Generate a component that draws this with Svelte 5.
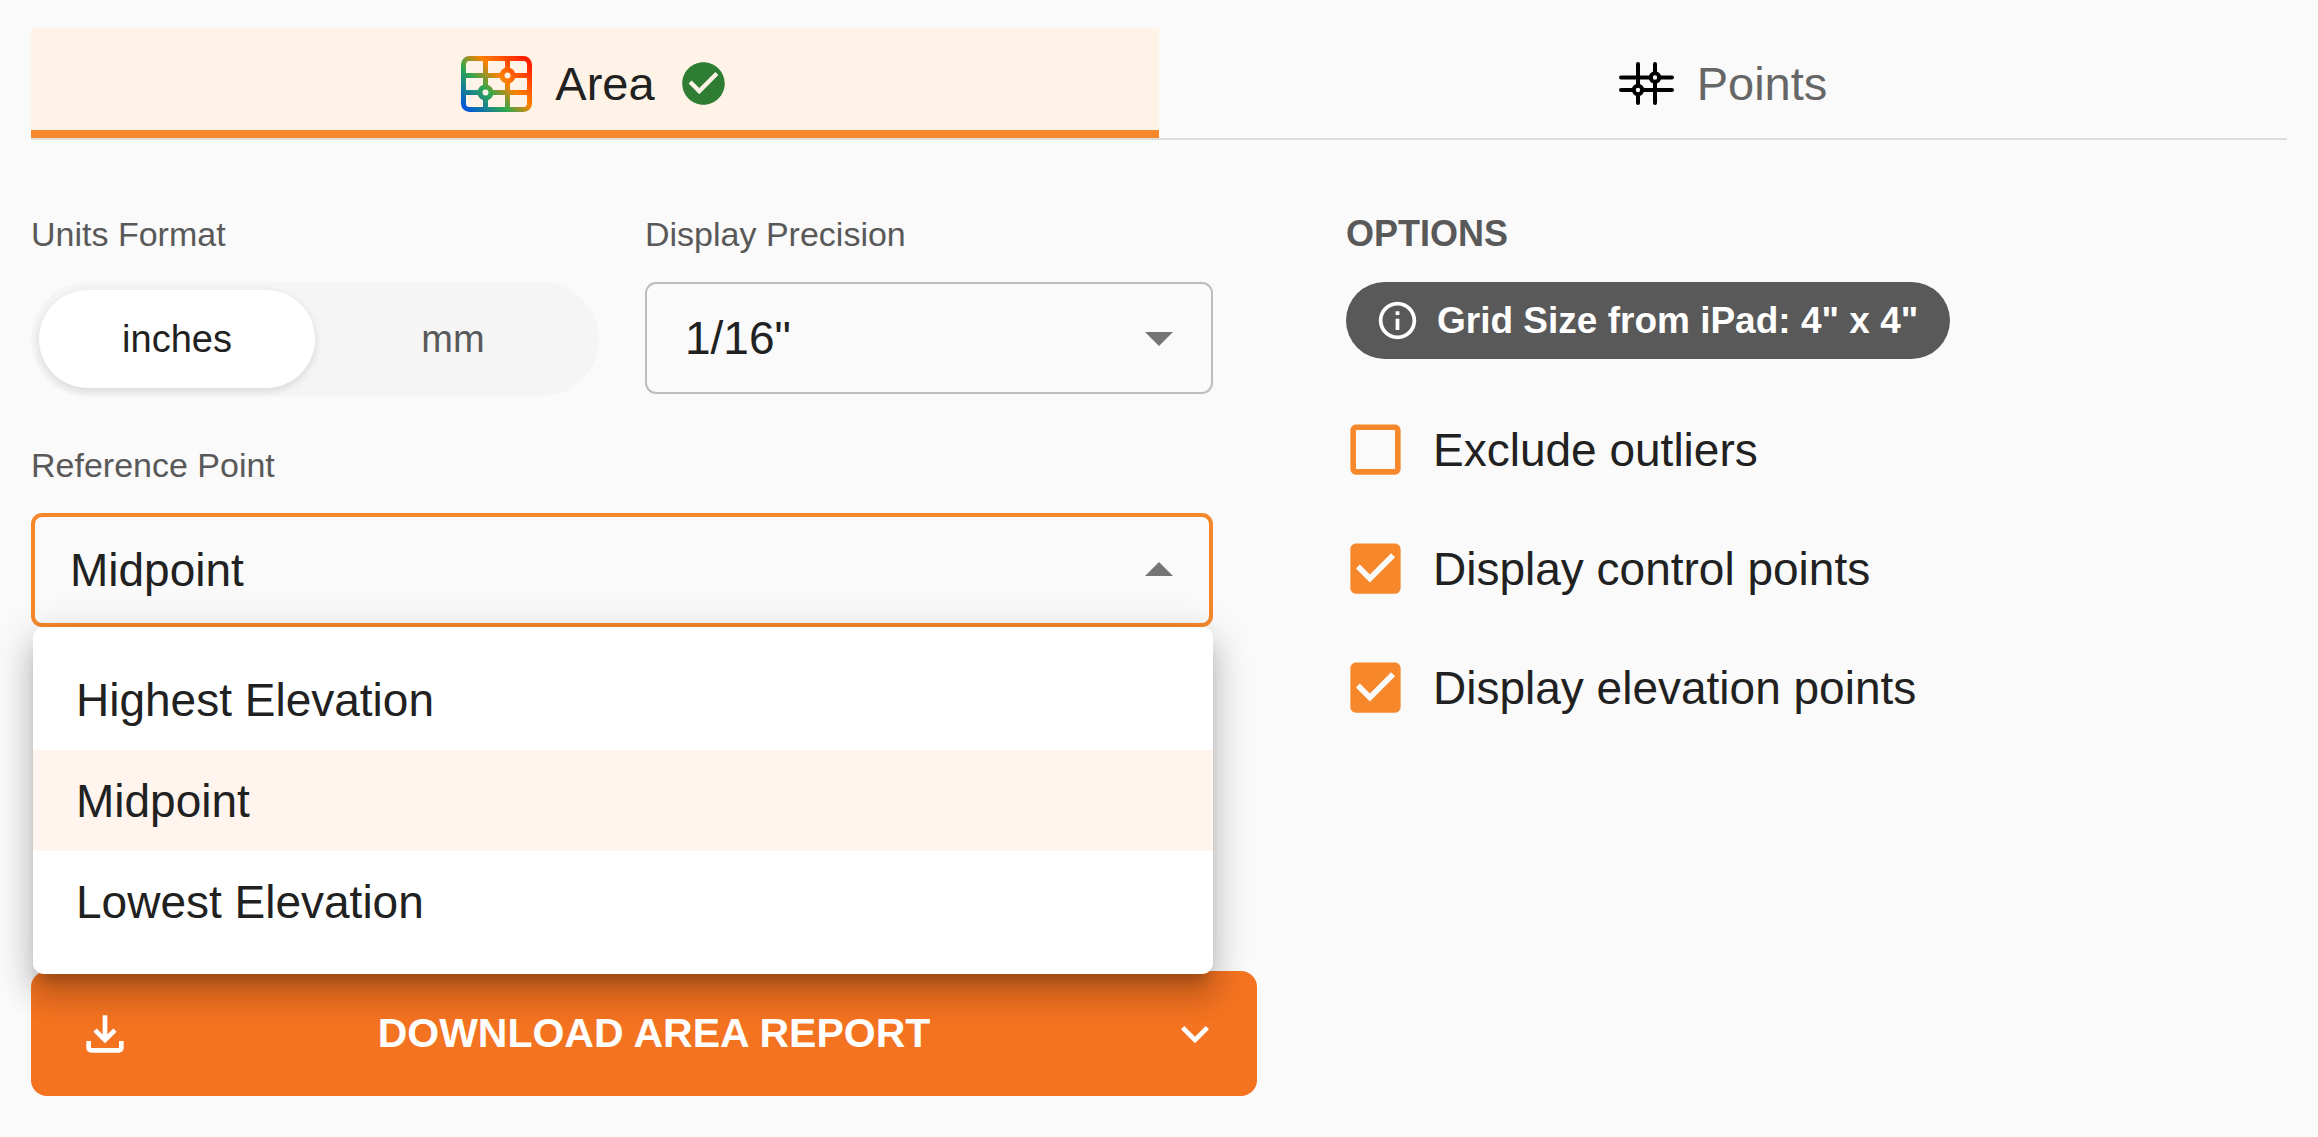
<script>
  let tab = $state('area');
  let units = $state('inches');
  let precision = $state('1/16"');
  let reference = $state('Midpoint');
  let menuOpen = $state(true);

  const points = ['Highest Elevation', 'Midpoint', 'Lowest Elevation'];
  const options = $state([
    { label: 'Exclude outliers', checked: false },
    { label: 'Display control points', checked: true },
    { label: 'Display elevation points', checked: true }
  ]);

  function choose(point) {
    reference = point;
    menuOpen = false;
  }
</script>

<main>
  <div class="tabs" role="tablist">
    <button class="tab" class:active={tab === 'area'} role="tab" aria-selected={tab === 'area'} onclick={() => (tab = 'area')}>
      <svg width="71" height="56" viewBox="0 0 71 56" aria-hidden="true">
        <defs>
          <linearGradient id="heat" gradientUnits="userSpaceOnUse" x1="4" y1="60" x2="67" y2="-4">
            <stop offset="0.06" stop-color="#0057d9" />
            <stop offset="0.37" stop-color="#2fa84f" />
            <stop offset="0.59" stop-color="#ff8000" />
            <stop offset="0.92" stop-color="#ff1e00" />
          </linearGradient>
        </defs>
        <g fill="none" stroke="url(#heat)" stroke-width="5">
          <rect x="2.5" y="2.5" width="66" height="51" rx="6" />
          <path d="M24.5 3v27M24.5 42v11M46.5 3v10M46.5 25v28M3 19.5h37.500M53 19.500h15M3 36.500h15M31 36.500h37" />
          <circle cx="46.500" cy="19.500" r="5.500" />
          <circle cx="24.500" cy="36.500" r="5.500" />
        </g>
      </svg>
      <span>Area</span>
      <svg class="done" width="51" height="51" viewBox="0 0 24 24" aria-hidden="true">
        <path d="M12 2C6.480 2 2 6.480 2 12s4.480 10 10 10 10-4.480 10-10S17.520 2 12 2zm-2 15l-5-5 1.410-1.410L10 14.170l7.590-7.590L19 8l-9 9z" />
      </svg>
    </button>
    <button class="tab" class:active={tab === 'points'} role="tab" aria-selected={tab === 'points'} onclick={() => (tab = 'points')}>
      <svg width="55" height="43" viewBox="0 0 55 43" aria-hidden="true">
        <g fill="none" stroke="#000" stroke-width="4" stroke-linecap="round">
          <path d="M2 15.500h30M40 15.500h13M2 28h13M23 28h30M19 2v22M19 34v7M36 2v9M36 21v20" />
          <circle cx="36" cy="15.500" r="4.200" />
          <circle cx="19" cy="28" r="4.200" />
        </g>
      </svg>
      <span>Points</span>
    </button>
  </div>

  <div class="panel">
    <section class="settings">
      <div class="row">
        <div class="field" role="group" aria-labelledby="units-label">
          <span class="label" id="units-label">Units Format</span>
          <div class="toggle">
            {#each ['inches', 'mm'] as unit}
              <button class:on={units === unit} aria-pressed={units === unit} onclick={() => (units = unit)}>{unit}</button>
            {/each}
          </div>
        </div>
        <div class="field">
          <label class="label" for="precision">Display Precision</label>
          <div class="select">
            <select id="precision" bind:value={precision}>
              <option>1/8"</option>
              <option>1/16"</option>
              <option>1/32"</option>
            </select>
            <svg class="arrow" width="28" height="16" viewBox="0 0 28 16" aria-hidden="true"><path d="M0 2h28L14 16z" /></svg>
          </div>
        </div>
      </div>

      <div class="field">
        <span class="label" id="reference-label">Reference Point</span>
        <div class="combo">
          <button class="combo-button" class:open={menuOpen} aria-haspopup="listbox" aria-expanded={menuOpen} aria-labelledby="reference-label reference-value" onclick={() => (menuOpen = !menuOpen)}>
            <span id="reference-value">{reference}</span>
            <svg class="arrow" width="28" height="16" viewBox="0 0 28 16" aria-hidden="true">
              <path d={menuOpen ? 'M0 14h28L14 0z' : 'M0 2h28L14 16z'} />
            </svg>
          </button>
          {#if menuOpen}
            <div class="menu" role="listbox" aria-labelledby="reference-label">
              {#each points as point}
                <button role="option" aria-selected={point === reference} class:selected={point === reference} onclick={() => choose(point)}>{point}</button>
              {/each}
            </div>
          {/if}
        </div>
      </div>
    </section>

    <section class="options">
      <h2>OPTIONS</h2>
      <div class="chip">
        <svg width="45" height="45" viewBox="0 0 24 24" aria-hidden="true">
          <path d="M11 7h2v2h-2zm0 4h2v6h-2zm1-9C6.480 2 2 6.480 2 12s4.480 10 10 10 10-4.480 10-10S17.520 2 12 2zm0 18c-4.410 0-8-3.590-8-8s3.590-8 8-8 8 3.590 8 8-3.590 8-8 8z" />
        </svg>
        <span>Grid Size from iPad: 4" x 4"</span>
      </div>
      <div class="checks">
        {#each options as option}
          <label class="check">
            <span class="box">
              <input type="checkbox" bind:checked={option.checked} />
              <svg width="67" height="67" viewBox="0 0 24 24" aria-hidden="true">
                {#if option.checked}
                  <path d="M19 3H5c-1.110 0-2 .9-2 2v14c0 1.100.890 2 2 2h14c1.110 0 2-.9 2-2V5c0-1.100-.890-2-2-2zm-9 14l-5-5 1.410-1.410L10 14.170l7.590-7.590L19 8l-9 9z" />
                {:else}
                  <path d="M19 5v14H5V5h14m0-2H5c-1.100 0-2 .9-2 2v14c0 1.100.9 2 2 2h14c1.100 0 2-.9 2-2V5c0-1.100-.9-2-2-2z" />
                {/if}
              </svg>
            </span>
            <span>{option.label}</span>
          </label>
        {/each}
      </div>
    </section>
  </div>

  <button class="download">
    <svg width="56" height="56" viewBox="0 0 24 24" aria-hidden="true">
      <path d="M18 15v3H6v-3H4v3c0 1.100.9 2 2 2h12c1.100 0 2-.9 2-2v-3h-2zm-1-4-1.410-1.410L13 12.170V4h-2v8.170L8.410 9.590 7 11l5 5 5-5z" />
    </svg>
    <span>DOWNLOAD AREA REPORT</span>
    <svg width="56" height="56" viewBox="0 0 24 24" aria-hidden="true">
      <path d="M16.590 8.590 12 13.170 7.410 8.590 6 10l6 6 6-6z" />
    </svg>
  </button>
</main>

<style>
  :global(body) {
    margin: 0;
    background: #fafafa;
    color: #212121;
    font-family: 'Liberation Sans', Arial, sans-serif;
  }

  main {
    padding: 28px 31px 40px;
  }

  button,
  select {
    margin: 0;
    border: 0;
    background: none;
    color: inherit;
    font: inherit;
    cursor: pointer;
  }

  svg {
    display: block;
    flex: none;
  }

  .tabs {
    display: grid;
    grid-template-columns: 1fr 1fr;
    border-bottom: 2px solid #dddddd;
  }

  .tab {
    display: flex;
    align-items: center;
    justify-content: center;
    gap: 23px;
    height: 110px;
    padding: 9px 0 0;
    border-bottom: 8px solid transparent;
    box-sizing: border-box;
    color: #666666;
    font-size: 47px;
  }

  .tab.active {
    border-bottom-color: #f6882b;
    background: #fff2e6;
    color: #212121;
  }

  .done {
    fill: #2e7d32;
  }

  .panel {
    display: grid;
    grid-template-columns: 1182fr 941fr;
    gap: 133px;
    padding-top: 74px;
  }

  .settings {
    display: grid;
    gap: 49px;
    align-content: start;
  }

  .row {
    display: grid;
    grid-template-columns: 1fr 1fr;
    gap: 46px;
  }

  .label,
  h2 {
    display: block;
    margin: 0 0 28px;
    color: #595959;
    font-size: 34px;
    font-weight: 400;
    line-height: 40px;
  }

  h2 {
    font-size: 36px;
    font-weight: 700;
  }

  .toggle {
    display: grid;
    grid-template-columns: 1fr 1fr;
    padding: 8px;
    border-radius: 57px;
    background: #f5f5f5;
  }

  .toggle button {
    height: 98px;
    border-radius: 49px;
    color: #595959;
    font-size: 38px;
  }

  .toggle .on {
    background: #ffffff;
    box-shadow: 0 3px 8px rgba(0, 0, 0, 0.12);
    color: #212121;
  }

  .select {
    display: grid;
    align-items: center;
  }

  .select > * {
    grid-area: 1 / 1;
  }

  .select .arrow {
    justify-self: end;
    margin-right: 40px;
    pointer-events: none;
  }

  select {
    appearance: none;
    width: 100%;
    height: 112px;
    padding: 0 80px 0 38px;
    border: 2px solid #bdbdbd;
    border-radius: 11px;
    font-size: 46px;
  }

  .arrow {
    fill: #757575;
  }

  .combo {
    position: relative;
  }

  .combo-button {
    display: flex;
    align-items: center;
    justify-content: space-between;
    width: 100%;
    height: 114px;
    padding: 0 36px 0 35px;
    border: 4px solid #bdbdbd;
    border-radius: 11px;
    font-size: 46px;
  }

  .combo-button.open {
    border-color: #f6882b;
  }

  .menu {
    position: absolute;
    z-index: 1;
    top: 100%;
    right: 0;
    left: 2px;
    display: grid;
    padding: 22px 0;
    border-radius: 11px;
    background: #ffffff;
    box-shadow:
      0 14px 14px -8px rgba(0, 0, 0, 0.2),
      0 22px 28px 3px rgba(0, 0, 0, 0.14),
      0 8px 39px 6px rgba(0, 0, 0, 0.12);
  }

  .menu button {
    height: 101px;
    padding: 0 43px;
    font-size: 46px;
    text-align: left;
  }

  .menu .selected {
    background: #fff5ee;
  }

  .chip {
    display: inline-flex;
    align-items: center;
    gap: 17px;
    height: 77px;
    padding: 0 32px 0 29px;
    border-radius: 39px;
    background: #595959;
    color: #ffffff;
    fill: #ffffff;
    font-size: 37px;
    font-weight: 700;
    white-space: nowrap;
  }

  .checks {
    display: grid;
    gap: 52px;
    padding-top: 57px;
    justify-items: start;
  }

  .check {
    display: flex;
    align-items: center;
    gap: 24px;
    margin-left: -4px;
    font-size: 46px;
    cursor: pointer;
  }

  .box {
    position: relative;
    fill: #f6882b;
  }

  .box input {
    position: absolute;
    inset: 0;
    width: 100%;
    height: 100%;
    margin: 0;
    opacity: 0;
  }

  .download {
    display: flex;
    align-items: center;
    width: 1226px;
    max-width: 100%;
    height: 125px;
    margin-top: 250px;
    padding: 0 34px 0 46px;
    border-radius: 16px;
    background: #f47321;
    color: #ffffff;
    fill: #ffffff;
    font-size: 41px;
    font-weight: 700;
  }

  .download span {
    flex: 1;
    padding-left: 8px;
  }
</style>
